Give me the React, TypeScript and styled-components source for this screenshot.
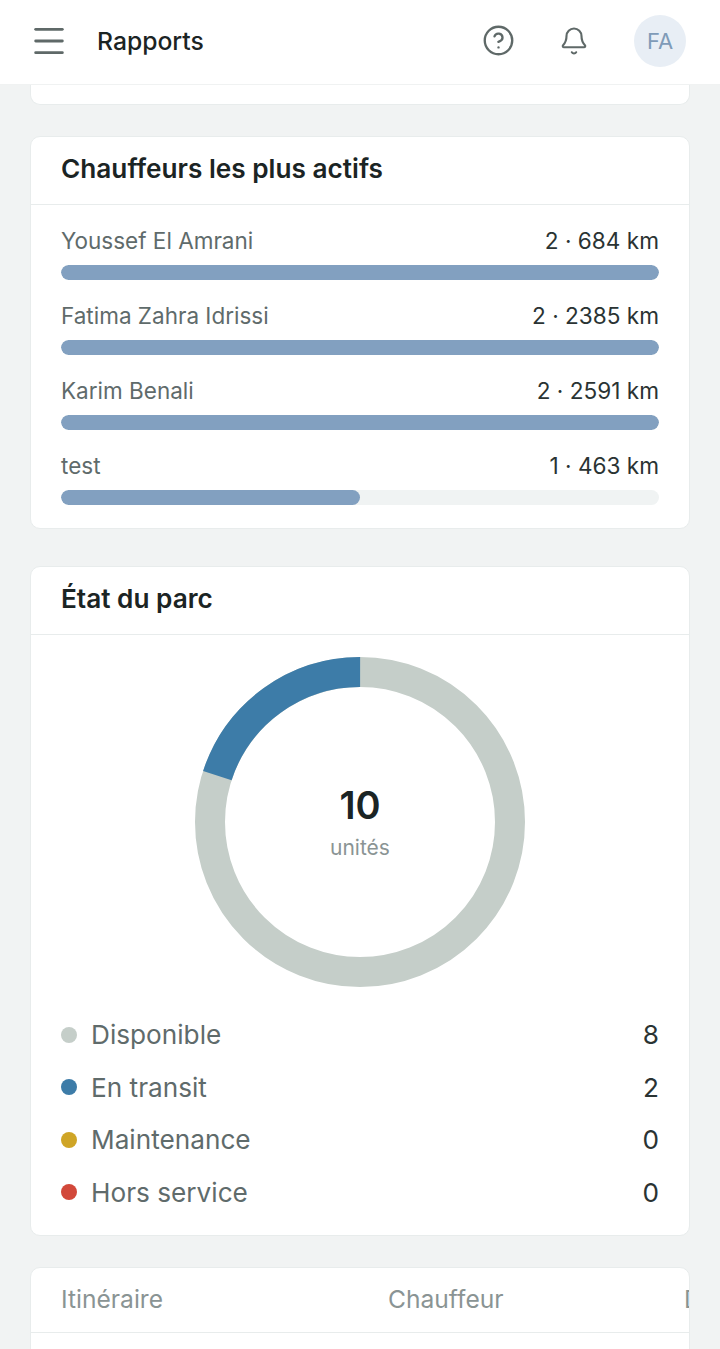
import React from "react";
import styled, { createGlobalStyle } from "styled-components";
import { Bell, CircleHelp, Menu } from "lucide-react";

const GlobalStyle = createGlobalStyle`
  html, body {
    margin: 0;
    padding: 0;
    height: 1349px;
    overflow: hidden;
    background: #f1f3f3;
    font-family: "Inter", "Liberation Sans", sans-serif;
  }
`;

const drivers = [
  { name: "Youssef El Amrani", value: "2 · 684 km", pct: 100 },
  { name: "Fatima Zahra Idrissi", value: "2 · 2385 km", pct: 100 },
  { name: "Karim Benali", value: "2 · 2591 km", pct: 100 },
  { name: "test", value: "1 · 463 km", pct: 50 },
];

const fleet = [
  { label: "Disponible", count: 8, color: "#c5cec9" },
  { label: "En transit", count: 2, color: "#3d7ca8" },
  { label: "Maintenance", count: 0, color: "#cfa526" },
  { label: "Hors service", count: 0, color: "#d2483a" },
];

const Page = styled.div`
  width: 720px;
  height: 1349px;
  overflow: hidden;
`;

const Header = styled.header`
  height: 85px;
  box-sizing: border-box;
  display: flex;
  align-items: center;
  padding: 0 34px 3px 29px;
  background: #ffffff;
  border-bottom: 1px solid #f0f2f2;
`;

const IconButton = styled.button<{ $gap?: number }>`
  display: flex;
  align-items: center;
  justify-content: center;
  padding: 0;
  border: none;
  background: none;
  color: #5f6968;
  margin-right: ${(p) => p.$gap ?? 0}px;
`;

const PageTitle = styled.h1`
  flex: 1;
  margin: 0 0 0 28px;
  font-size: 24.7px;
  font-weight: 500;
  color: #1b2424;
`;

const Avatar = styled.div`
  width: 52px;
  height: 52px;
  border-radius: 50%;
  background: #e8eef5;
  color: #7f9bb8;
  font-size: 22px;
  font-weight: 400;
  display: flex;
  align-items: center;
  justify-content: center;
`;

const Content = styled.main`
  padding: 0 30px;
  display: flex;
  flex-direction: column;
`;

const Card = styled.section<{ $top?: number }>`
  background: #ffffff;
  border: 1px solid #e8ecec;
  border-radius: 10px;
  box-sizing: border-box;
  overflow: hidden;
  margin-top: ${(p) => p.$top ?? 0}px;
`;

const StubCard = styled(Card)`
  height: 20px;
  border-top: none;
  border-radius: 0 0 10px 10px;
`;

const CardHeader = styled.div`
  height: 68px;
  box-sizing: border-box;
  padding: 0 30px 4px;
  display: flex;
  align-items: center;
  border-bottom: 1px solid #e8ecec;
`;

const CardTitle = styled.h2`
  margin: 0;
  font-size: 26.2px;
  font-weight: 600;
  color: #1b2424;
`;

const DriverList = styled.div`
  padding: 21px 30px 23px;
  display: flex;
  flex-direction: column;
  gap: 21px;
`;

const DriverRow = styled.div`
  display: flex;
  flex-direction: column;
  gap: 10px;
`;

const DriverLine = styled.div`
  display: flex;
  justify-content: space-between;
  align-items: center;
  height: 29px;
  font-size: 22.5px;
`;

const DriverName = styled.span`
  color: #5f6b6b;
`;

const DriverValue = styled.span`
  color: #2a3333;
  font-size: 22.6px;
  font-weight: 400;
`;

const Track = styled.div`
  height: 15px;
  border-radius: 8px;
  background: #f0f3f3;
  overflow: hidden;
`;

const Fill = styled.div`
  height: 100%;
  border-radius: 8px;
  background: #82a0c0;
`;

const DonutWrap = styled.div`
  position: relative;
  width: 330px;
  height: 330px;
  margin: 22px auto 0;
`;

const DonutCenter = styled.div`
  position: absolute;
  inset: 0;
  display: flex;
  flex-direction: column;
  align-items: center;
  justify-content: center;
  box-sizing: border-box;
`;

const DonutNumber = styled.div`
  font-size: 38px;
  line-height: 46px;
  font-weight: 600;
  color: #1b2424;
`;

const DonutLabel = styled.div`
  margin-top: 5px;
  font-size: 21px;
  line-height: 30px;
  color: #8a9494;
`;

const Legend = styled.ul`
  list-style: none;
  margin: 21.5px 0 0;
  padding: 0 30px 16.5px;
`;

const LegendRow = styled.li`
  height: 52.5px;
  display: flex;
  align-items: center;
  font-size: 26.2px;
`;

const Dot = styled.span<{ $color: string }>`
  width: 16px;
  height: 16px;
  border-radius: 50%;
  background: ${(p) => p.$color};
  margin-right: 14px;
`;

const LegendLabel = styled.span`
  flex: 1;
  color: #5f6b6b;
`;

const LegendCount = styled.span`
  color: #2a3333;
`;

const TableHead = styled.div`
  height: 65px;
  box-sizing: border-box;
  border-bottom: 1px solid #e8ecec;
  display: grid;
  grid-template-columns: 327px 296px 100px;
  align-items: center;
  padding: 0 0 2px 30px;
  font-size: 24.6px;
  font-weight: 400;
  color: #8a9494;
  white-space: nowrap;
`;

const TableBody = styled.div`
  height: 60px;
`;

function Donut() {
  const r = 150;
  const c = 2 * Math.PI * r;
  return (
    <svg width="330" height="330" viewBox="0 0 330 330">
      <circle cx="165" cy="165" r={r} fill="none" stroke="#c5cec9" strokeWidth="30" />
      <circle
        cx="165"
        cy="165"
        r={r}
        fill="none"
        stroke="#3d7ca8"
        strokeWidth="30"
        strokeDasharray={`${c * 0.2} ${c * 0.8}`}
        transform="rotate(-162 165 165)"
      />
    </svg>
  );
}

export default function App() {
  return (
    <Page>
      <GlobalStyle />
      <Header>
        <IconButton>
          <Menu size={40} strokeWidth={1.7} />
        </IconButton>
        <PageTitle>Rapports</PageTitle>
        <IconButton $gap={44}>
          <CircleHelp size={33} strokeWidth={1.7} />
        </IconButton>
        <IconButton $gap={45}>
          <Bell size={30} strokeWidth={1.7} />
        </IconButton>
        <Avatar>FA</Avatar>
      </Header>
      <Content>
        <StubCard />
        <Card $top={31}>
          <CardHeader>
            <CardTitle>Chauffeurs les plus actifs</CardTitle>
          </CardHeader>
          <DriverList>
            {drivers.map((d) => (
              <DriverRow key={d.name}>
                <DriverLine>
                  <DriverName>{d.name}</DriverName>
                  <DriverValue>{d.value}</DriverValue>
                </DriverLine>
                <Track>
                  <Fill style={{ width: `${d.pct}%` }} />
                </Track>
              </DriverRow>
            ))}
          </DriverList>
        </Card>
        <Card $top={37}>
          <CardHeader>
            <CardTitle>État du parc</CardTitle>
          </CardHeader>
          <DonutWrap>
            <Donut />
            <DonutCenter>
              <DonutNumber>10</DonutNumber>
              <DonutLabel>unités</DonutLabel>
            </DonutCenter>
          </DonutWrap>
          <Legend>
            {fleet.map((f) => (
              <LegendRow key={f.label}>
                <Dot $color={f.color} />
                <LegendLabel>{f.label}</LegendLabel>
                <LegendCount>{f.count}</LegendCount>
              </LegendRow>
            ))}
          </Legend>
        </Card>
        <Card $top={31}>
          <TableHead>
            <span>Itinéraire</span>
            <span>Chauffeur</span>
            <span>Date</span>
          </TableHead>
          <TableBody />
        </Card>
      </Content>
    </Page>
  );
}
